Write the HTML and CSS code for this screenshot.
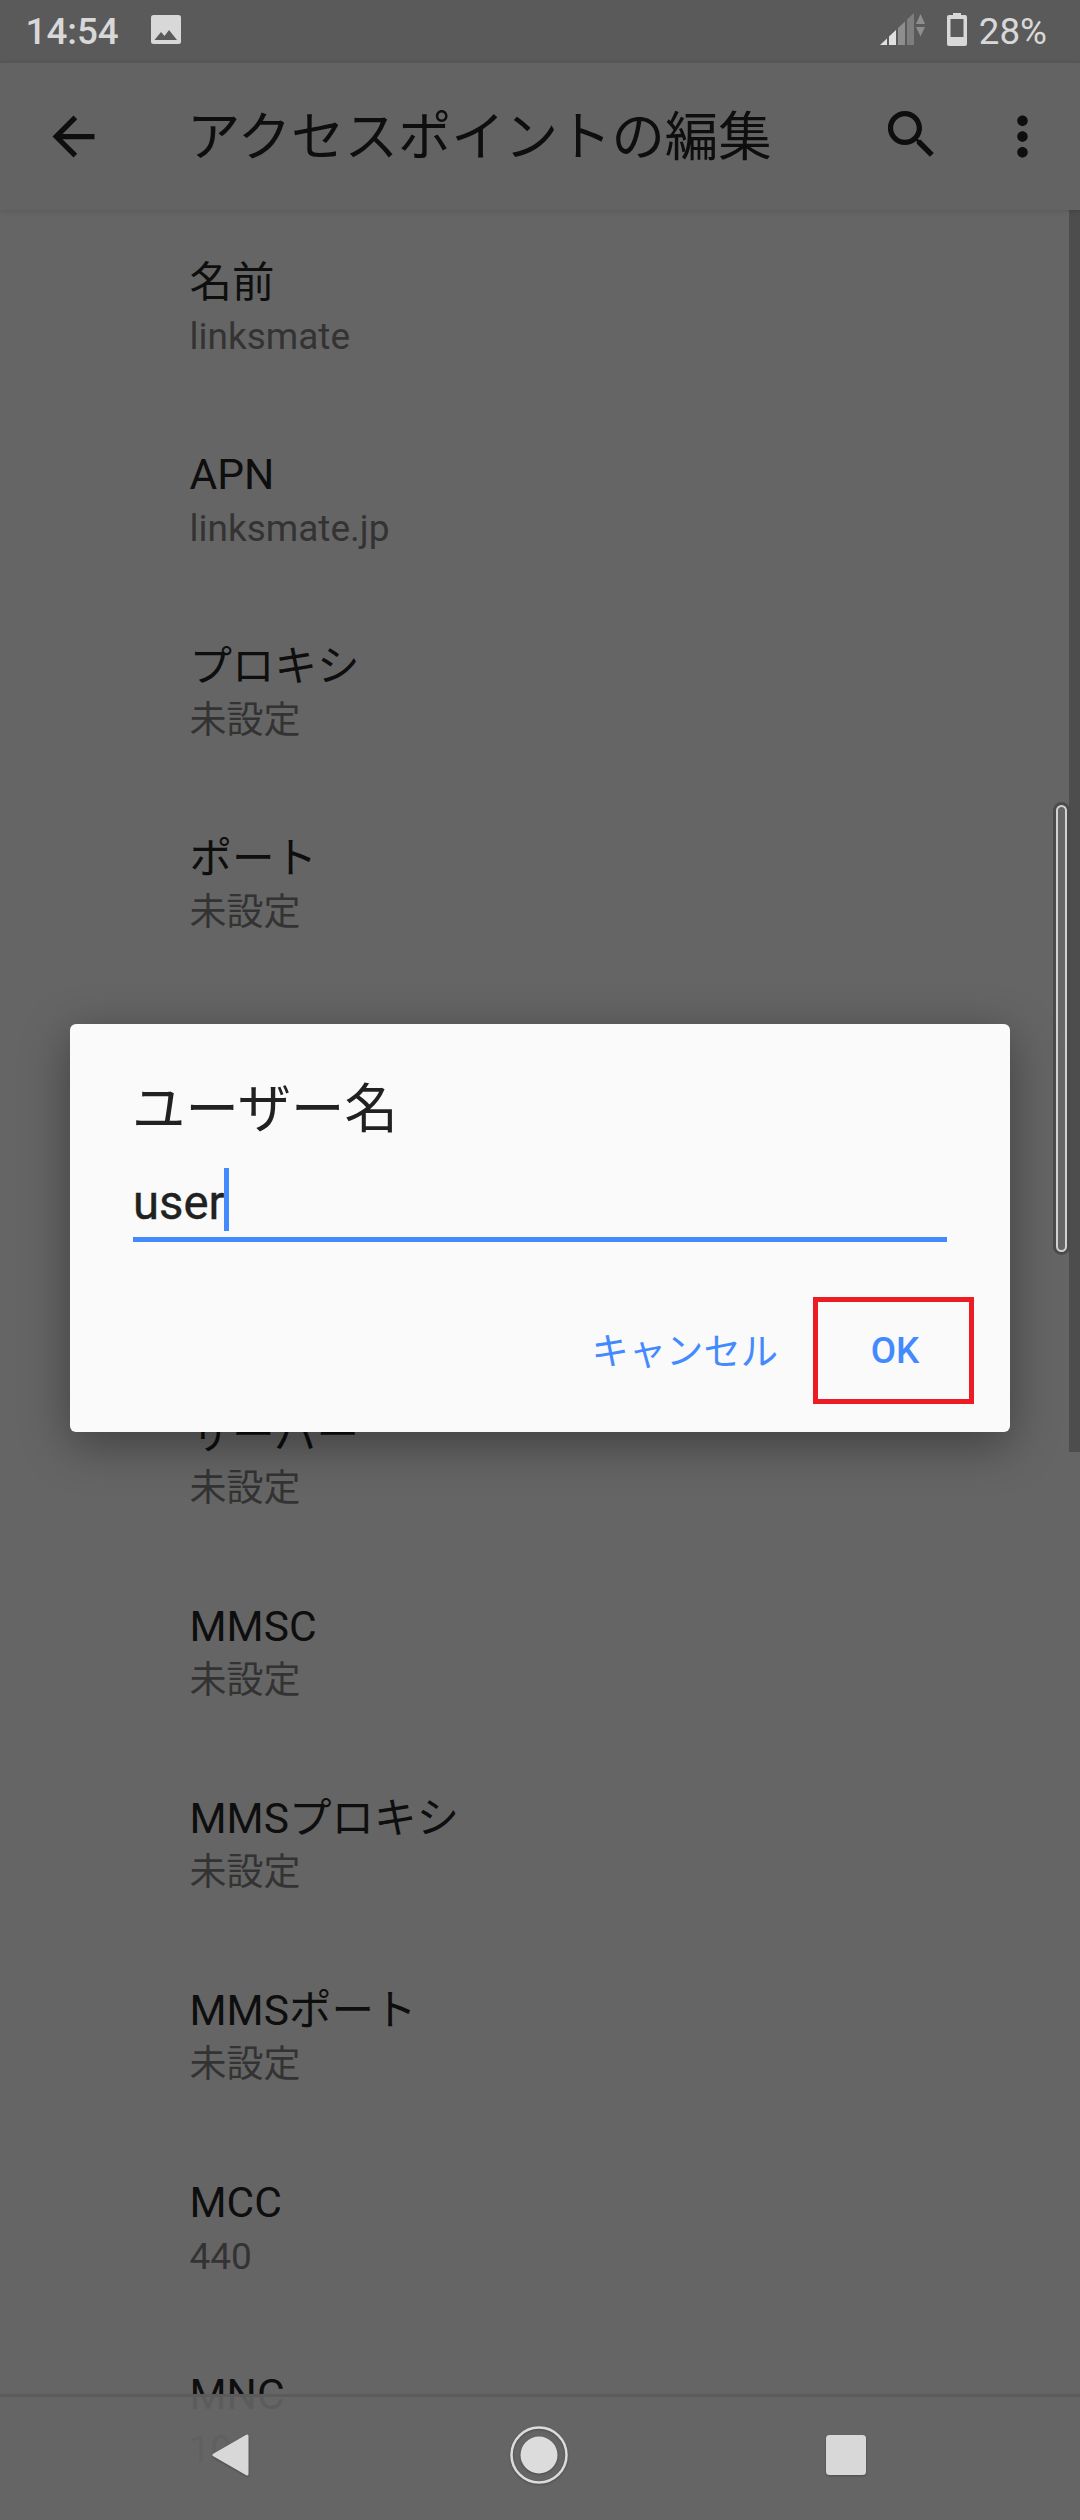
FILE: index.html
```html
<!DOCTYPE html>
<html lang="ja">
<head>
<meta charset="utf-8">
<title>アクセスポイントの編集</title>
<link rel="stylesheet" href="styles.css">
</head>
<body>
<div class="screen">
  <header class="statusbar">
    <span class="clock">14:54</span>
    <svg class="st-image" viewBox="0 0 30 29" width="30" height="29"><rect width="30" height="29" rx="2.5" fill="#d8d8d8"/><path d="M3.5 25L10 17l3.5 4L18 15l8 10z" fill="#5a5a5a"/></svg>
    <span class="st-spacer"></span>
    <svg class="st-signal" viewBox="0 0 46 33" width="46" height="33">
      <path d="M0 32l7-6.600V32z" fill="#e0e0e0"/>
      <path d="M9 23.500l7-6.500V32H9z" fill="#e0e0e0"/>
      <path d="M18 15l7-6.500V32h-7z" fill="#8e8e8e"/>
      <path d="M27 6.600L34 0v32h-7z" fill="#7e7e7e"/>
      <path d="M40.500 1l4.500 10h-9z" fill="#8e8e8e"/>
      <path d="M36 14h9l-4.500 9.500z" fill="#8e8e8e"/>
    </svg>
    <svg class="st-battery" viewBox="0 0 20 33" width="20" height="33"><rect x="6" width="8" height="4" fill="#d8d8d8"/><rect y="2" width="20" height="31" rx="2" fill="#d8d8d8"/><rect x="3.500" y="6" width="13" height="18" fill="#5a5a5a"/></svg>
    <span class="battery-text">28%</span>
  </header>

  <header class="toolbar">
    <svg class="tb-back" viewBox="0 0 24 24" width="63" height="63"><path d="M20 11H7.830l5.590-5.590L12 4l-8 8 8 8 1.410-1.410L7.830 13H20v-2z"/></svg>
    <h1 class="tb-title">アクセスポイントの編集</h1>
    <svg class="tb-search" viewBox="0 0 24 24" width="63" height="63"><path d="M15.500 14h-.790l-.280-.270C15.410 12.590 16 11.110 16 9.500 16 5.910 13.090 3 9.500 3S3 5.910 3 9.500 5.910 16 9.500 16c1.610 0 3.090-.590 4.230-1.570l.270.280v.790l5 4.990L20.490 19l-4.990-5zm-6 0C7.010 14 5 11.990 5 9.500S7.010 5 9.500 5 14 7.010 14 9.500 11.990 14 9.500 14z"/></svg>
    <svg class="tb-more" viewBox="0 0 24 24" width="63" height="63"><path d="M12 8c1.100 0 2-.9 2-2s-.9-2-2-2-2 .9-2 2 .9 2 2 2zm0 2c-1.100 0-2 .9-2 2s.9 2 2 2 2-.9 2-2-.9-2-2-2zm0 6c-1.100 0-2 .9-2 2s.9 2 2 2 2-.9 2-2-.9-2-2-2z"/></svg>
  </header>

  <main class="list">
    <div class="item"><div class="item-title">名前</div><div class="item-value">linksmate</div></div>
    <div class="item"><div class="item-title">APN</div><div class="item-value">linksmate.jp</div></div>
    <div class="item"><div class="item-title">プロキシ</div><div class="item-value">未設定</div></div>
    <div class="item"><div class="item-title">ポート</div><div class="item-value">未設定</div></div>
    <div class="item"><div class="item-title">ユーザー名</div><div class="item-value">未設定</div></div>
    <div class="item"><div class="item-title">パスワード</div><div class="item-value">未設定</div></div>
    <div class="item"><div class="item-title">サーバー</div><div class="item-value">未設定</div></div>
    <div class="item"><div class="item-title">MMSC</div><div class="item-value">未設定</div></div>
    <div class="item"><div class="item-title">MMSプロキシ</div><div class="item-value">未設定</div></div>
    <div class="item"><div class="item-title">MMSポート</div><div class="item-value">未設定</div></div>
    <div class="item"><div class="item-title">MCC</div><div class="item-value">440</div></div>
    <div class="item"><div class="item-title">MNC</div><div class="item-value">10</div></div>
  </main>

  <div class="edge-strip"></div>
  <div class="scrollbar"><div class="scrollbar-ring"></div></div>

  <section class="dialog">
    <div class="dialog-body">
      <h2 class="dialog-title">ユーザー名</h2>
      <div class="field"><span class="field-text">user</span><span class="caret"></span></div>
    </div>
    <div class="dialog-actions">
      <span class="btn btn-cancel">キャンセル</span>
      <span class="btn btn-ok">OK</span>
    </div>
  </section>

  <nav class="navbar">
    <svg class="nav-back" viewBox="0 0 37 42" width="37" height="42"><path d="M2 21L35 2v38z" fill="#d8d8d8" stroke="#d8d8d8" stroke-width="3" stroke-linejoin="round"/></svg>
    <svg class="nav-home" viewBox="0 0 58 58" width="58" height="58"><circle cx="29" cy="29" r="27.500" fill="none" stroke="#dcdcdc" stroke-width="2.500"/><circle cx="29" cy="29" r="18.500" fill="#dcdcdc"/></svg>
    <svg class="nav-recent" viewBox="0 0 40 40" width="40" height="40"><rect width="40" height="40" rx="3.500" fill="#d8d8d8"/></svg>
  </nav>
</div>
</body>
</html>
```
FILE: styles.css
```css
* { box-sizing: border-box; }

html, body { margin: 0; padding: 0; }

body {
  font-family: Roboto, "Noto Sans CJK JP", sans-serif;
  background: #656565;
}

.screen {
  position: relative;
  width: 1080px;
  height: 2520px;
  overflow: hidden;
  display: flex;
  flex-direction: column;
  background: #656565;
}

/* status bar */
.statusbar {
  flex: none;
  height: 63px;
  display: flex;
  align-items: center;
  padding: 0 33px 0 25.500px;
  background: #5a5a5a;
  color: #d8d8d8;
  font-size: 36.750px;
}

.clock { font-weight: 500; width: 125.500px; }
.st-image { margin-top: -4px; }
.st-spacer { flex: 1; }
.st-signal { margin-top: -5px; }
.st-battery { margin-left: 21px; margin-top: -5px; }
.battery-text { margin-left: 11.500px; }

/* toolbar */
.toolbar {
  position: relative;
  z-index: 1;
  flex: none;
  height: 147px;
  display: flex;
  align-items: center;
  background: #636363;
  box-shadow: 0 1px 5px rgba(0, 0, 0, .14);
}

.toolbar svg { fill: #0e0e0e; flex: none; }
.tb-back { margin-left: 42px; }
.tb-search { margin-right: 48px; margin-top: -4px; }
.tb-more { margin-right: 26px; }

.tb-title {
  flex: 1;
  margin: 0 0 0 82px;
  padding-top: 3px;
  font-size: 53.400px;
  font-weight: 400;
  line-height: 70px;
  color: #0e0e0e;
}

/* settings list */
.list {
  flex: 1;
  overflow: hidden;
}

.item {
  height: 192px;
  padding: 45px 0 0 189.500px;
}

.item-title {
  font-size: 42.500px;
  line-height: 56px;
  color: #0e0e0e;
}

.item-value {
  font-size: 37px;
  line-height: 51px;
  color: #333;
}

.edge-strip {
  position: absolute;
  top: 210px;
  right: 0;
  width: 11px;
  height: 1242px;
  background: #4d4d4d;
}

.scrollbar {
  position: absolute;
  top: 802px;
  left: 1053px;
  width: 17px;
  height: 453px;
  padding: 3px;
  border-radius: 9px;
  background: #4b4b4b;
}

.scrollbar-ring {
  height: 100%;
  border: 2.500px solid #d2d2d2;
  border-radius: 6px;
  background: #666;
}

/* dialog */
.dialog {
  position: absolute;
  top: 1024px;
  left: 70px;
  width: 940px;
  height: 408px;
  border-radius: 6px;
  background: #fafafa;
  box-shadow: 0 12px 48px rgba(0, 0, 0, .38);
}

.dialog-body { padding: 53px 63px 0; }

.dialog-title {
  margin: 0 0 0 -1px;
  font-size: 53.400px;
  font-weight: 400;
  line-height: 66px;
  color: #212121;
}

.field {
  display: flex;
  align-items: flex-start;
  height: 99px;
  padding-top: 25px;
  border-bottom: 5px solid #448aff;
}

.field-text {
  font-size: 47.250px;
  line-height: 63px;
  margin-top: 4px;
  color: #212121;
  -webkit-text-stroke: .4px #212121;
}

.caret {
  width: 5px;
  height: 63px;
  margin-left: -1px;
  background: #448aff;
}

.dialog-actions {
  display: flex;
  justify-content: flex-end;
  align-items: center;
  gap: 35px;
  margin-top: 55px;
  padding-right: 36px;
}

.btn {
  font-size: 36.750px;
  font-weight: 400;
  line-height: 50px;
  color: #448aff;
}

.btn-cancel {
  padding-top: 3px;
  font-size: 37.300px;
}

.btn-ok {
  display: flex;
  justify-content: center;
  align-items: center;
  width: 161px;
  height: 107px;
  padding-left: 3px;
  border: 5px solid #ed1c24;
  font-weight: 500;
}

/* navigation bar */
.navbar {
  position: absolute;
  left: 0;
  right: 0;
  bottom: 0;
  height: 126px;
  display: flex;
  align-items: center;
  padding: 0 0 7px 212px;
  border-top: 3px solid #5b5b5b;
  background: rgba(101, 101, 101, .9);
}

.navbar svg { flex: none; filter: drop-shadow(0 1.500px 1px rgba(0, 0, 0, .25)); }
.nav-home { margin-left: 261px; }
.nav-recent { margin-left: 258px; }
```
